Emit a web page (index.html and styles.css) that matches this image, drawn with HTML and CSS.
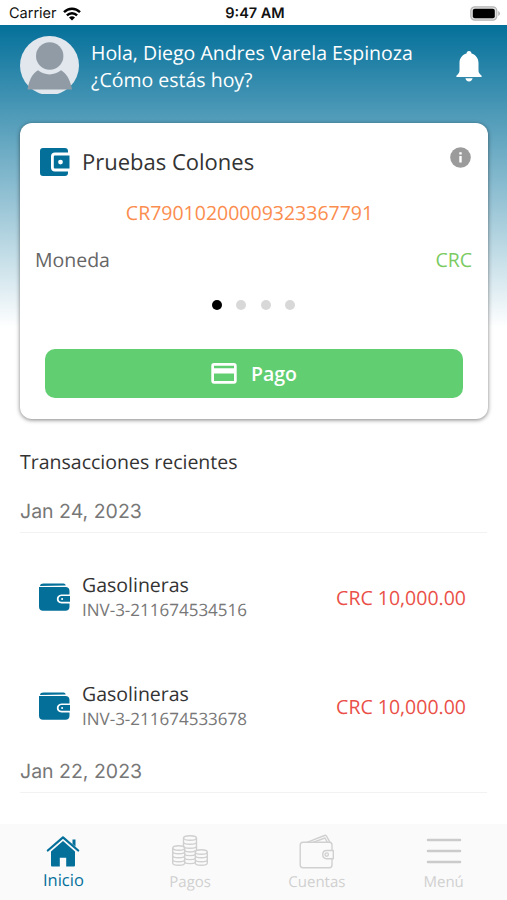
FILE: index.html
```html
<!DOCTYPE html>
<html lang="es">
<head>
  <meta charset="UTF-8" />
  <meta name="viewport" content="width=device-width, initial-scale=1.0"/>
  <title>Inicio</title>
  <link rel="stylesheet" href="styles.css">
</head>
<body>

  <!-- Status bar -->
  <div class="status-bar">
    <div class="carrier">
      <span>Carrier</span>
      <svg width="18" height="14" viewBox="0 0 18 14">
        <g fill="none" stroke="#000" stroke-width="2.4">
          <path d="M1 5.2C5.5.6 12.5.6 17 5.2"/>
          <path d="M3.9 8.4c2.9-2.9 7.3-2.9 10.2 0"/>
        </g>
        <path d="M6 10.5c1.7-1.600 4.300-1.600 6 0l-3 3z"/>
      </svg>
    </div>
    <span class="clock">9:47 AM</span>
    <svg class="battery" width="31" height="15" viewBox="0 0 31 15">
      <rect x=".8" y=".8" width="26" height="13.4" rx="4" fill="#e0e0e0" stroke="#b5b5b5" stroke-width="1.2"/>
      <rect x="2.8" y="2.8" width="22" height="9.4" rx="2" fill="#000"/>
      <path d="M28.3 5c2 .8 2 4.200 0 5z" fill="#aaa"/>
    </svg>
  </div>

  <main>
    <!-- Greeting -->
    <header>
      <svg class="avatar" width="59" height="59" viewBox="0 0 59 59">
        <clipPath id="face"><path d="M0 0h59v58H0z"/></clipPath>
        <g clip-path="url(#face)">
          <circle cx="29.5" cy="29.5" r="29.5" fill="#e1e7ed"/>
          <circle cx="29.7" cy="20" r="13.7" fill="#919ba5"/>
          <path d="M7.500 53.500c1.500-9 4.500-15.500 10.500-19.200 6.500 5.500 16.500 5.500 23 0 6 3.700 9.500 10.200 11 19.200z" fill="#919ba5"/>
        </g>
      </svg>
      <div class="greeting">
        <p>Hola, Diego Andres Varela Espinoza</p>
        <p class="question">¿Cómo estás hoy?</p>
      </div>
      <svg class="bell" width="26" height="31" viewBox="0 0 26 31">
        <path fill="#fff" d="M13 0c1.600 0 2.400 1 2.500 2.600 4.200 1.200 7 4.700 7 9.400v7.500c0 1.500.5 2.600 1.600 3.700l1.500 1.500V26H.4v-1.300l1.500-1.500c1.100-1.100 1.600-2.200 1.600-3.700V12c0-4.700 2.800-8.200 7-9.400C10.600 1 11.400 0 13 0zM9.400 27.200h7.200c-.3 2-1.700 3.200-3.600 3.200s-3.300-1.200-3.600-3.200z"/>
      </svg>
    </header>

    <!-- Account card -->
    <section class="card">
      <div class="card-title">
        <svg width="30" height="28" viewBox="0 0 30 28">
          <path fill="#04709a" d="M3 0h22c1.800 0 3 1.200 3 3v1.600H15c-2.600 0-4 1.500-4 4v11c0 2.500 1.400 4 4 4h13v1.400c0 1.800-1.200 3-3 3H3c-1.900 0-3-1.200-3-3V3c0-1.800 1.100-3 3-3z"/>
          <path fill="#04709a" fill-rule="evenodd" d="M15.200 7.600H29.500v13H15.200c-.9 0-1.400-.5-1.400-1.400V9c0-.9.5-1.400 1.400-1.400zm5.300 4.100a2.400 2.400 0 1 0 0 4.800 2.400 2.400 0 0 0 0-4.800z"/>
        </svg>
        <h2>Pruebas Colones</h2>
        <svg class="info" width="21" height="21" viewBox="0 0 21 21">
          <circle cx="10.5" cy="10.5" r="10.3" fill="#9b9b9b"/>
          <path d="M9.300 5.200h2.400v2.300H9.300zM9.300 9h2.400v6.600H9.300z" fill="#fff"/>
        </svg>
      </div>
      <p class="iban">CR79010200009323367791</p>
      <div class="currency">
        <span>Moneda</span>
        <span class="code">CRC</span>
      </div>
      <div class="dots">
        <i class="active"></i><i></i><i></i><i></i>
      </div>
      <button>
        <svg width="26" height="21" viewBox="0 0 26 21">
          <path fill="#fff" fill-rule="evenodd" d="M3 0h20c1.700 0 2.700 1 2.700 2.700v15.400c0 1.700-1 2.600-2.700 2.600H3c-1.700 0-2.700-.9-2.700-2.600V2.700C.3 1 1.300 0 3 0zm0 2.700v2.600h20V2.700zm0 7.700v7.700h20v-7.700z"/>
        </svg>
        <span>Pago</span>
      </button>
    </section>

    <!-- Transactions -->
    <section class="transactions">
      <h3>Transacciones recientes</h3>
      <p class="date">Jan 24, 2023</p>
      <div class="row">
        <svg width="31" height="28" viewBox="0 0 31 28">
          <path d="M1 3C1.300 1.200 2.500.5 4.500.5h20c1.200 0 2 .7 2.200 2z" fill="#04709a"/>
          <path d="M0 4h26.500C29 4 30.500 5.500 30.500 8v3.400h-8c-6.200 0-6.200 9 0 9h8v3.300c0 2.500-1.500 4-4 4H4c-2.500 0-4-1.500-4-4z" fill="#04709a"/>
          <path d="M22.500 13H31v5.800h-8.500c-3.800 0-3.800-5.800 0-5.800zm.6 1.900a1 1 0 1 0 0 2 1 1 0 0 0 0-2z" fill="#04709a" fill-rule="evenodd"/>
        </svg>
        <div class="detail">
          <p class="name">Gasolineras</p>
          <p class="invoice">INV-3-211674534516</p>
        </div>
        <span class="amount">CRC 10,000.00</span>
      </div>
      <div class="row">
        <svg width="31" height="28" viewBox="0 0 31 28">
          <path d="M1 3C1.300 1.200 2.500.5 4.500.5h20c1.200 0 2 .7 2.200 2z" fill="#04709a"/>
          <path d="M0 4h26.500C29 4 30.500 5.500 30.500 8v3.400h-8c-6.200 0-6.200 9 0 9h8v3.300c0 2.500-1.500 4-4 4H4c-2.500 0-4-1.500-4-4z" fill="#04709a"/>
          <path d="M22.500 13H31v5.800h-8.500c-3.800 0-3.800-5.800 0-5.800zm.6 1.900a1 1 0 1 0 0 2 1 1 0 0 0 0-2z" fill="#04709a" fill-rule="evenodd"/>
        </svg>
        <div class="detail">
          <p class="name">Gasolineras</p>
          <p class="invoice">INV-3-211674533678</p>
        </div>
        <span class="amount">CRC 10,000.00</span>
      </div>
      <p class="date">Jan 22, 2023</p>
    </section>
  </main>

  <!-- Bottom tabs -->
  <nav>
    <a class="active">
      <svg width="36" height="36" viewBox="0 0 36 36">
        <path d="M2.800 17.500 18 4.300 33.200 17.500" fill="none" stroke="#04709a" stroke-width="2.200" stroke-linecap="round" stroke-linejoin="round"/>
        <path d="M18 8 30 18.500v13.700c0 .8-.5 1.300-1.300 1.300H21.200v-8.800h-6.400v8.800H7.300c-.8 0-1.300-.5-1.300-1.300V18.500zM27.500 6.500h3v7l-3-2.600z" fill="#04709a"/>
      </svg>
      <span>Inicio</span>
    </a>
    <a>
      <svg width="36" height="36" viewBox="0 0 36 36" fill="none" stroke="#d0d0d0" stroke-width="1.400">
        <ellipse cx="18" cy="5" rx="6.500" ry="2.300"/>
        <path d="M11.500 5v8M24.500 5v12M11.500 9c0 3 13 3 13 0M11.500 13c0 3 13 3 13 0M12.500 17.500c2 2 9 2 11 0M12.500 21.500c2 1.500 9 1.500 11 0M12.500 25.500c2 1.500 9 1.500 11 0M12.500 29.500c2 1.500 9 1.500 11 0"/>
        <ellipse cx="6.700" cy="15" rx="6" ry="2.300"/>
        <path d="M.7 15v15c0 3 12 3 12 0V15M.7 18.500c0 3 12 3 12 0M.7 22.500c0 3 12 3 12 0M.7 26.500c0 3 12 3 12 0"/>
        <ellipse cx="29.300" cy="19" rx="6" ry="2.300"/>
        <path d="M23.300 19v11c0 3 12 3 12 0V19M23.300 22.500c0 3 12 3 12 0M23.300 26.500c0 3 12 3 12 0"/>
      </svg>
      <span>Pagos</span>
    </a>
    <a>
      <svg width="36" height="36" viewBox="0 0 36 36" fill="none" stroke="#d0d0d0" stroke-width="1.400" stroke-linejoin="round">
        <path d="M33 17.500V12c0-1.700-1-2.700-2.700-2.700H4C2.200 9.300 1.200 10.300 1.200 12v20c0 1.700 1 2.700 2.800 2.700h26.300c1.700 0 2.700-1 2.700-2.700v-6.300"/>
        <path d="M8 9.300 25.500 2.500c1-.4 1.800 0 2.200.9l3.300 6M14 9.300 26 5l2.400 4.300"/>
        <path d="M34.300 17.500h-6.800c-5 0-5 8.200 0 8.200h6.800z"/>
        <circle cx="27.700" cy="21.600" r="1.700"/>
      </svg>
      <span>Cuentas</span>
    </a>
    <a>
      <svg width="36" height="36" viewBox="0 0 36 36">
        <path d="M2 7h32M2 18h32M2 29h32" stroke="#cbcbcb" stroke-width="2.600" stroke-linecap="round"/>
      </svg>
      <span>Menú</span>
    </a>
  </nav>

</body>
</html>
```
FILE: styles.css
```css
* { box-sizing: border-box; margin: 0; padding: 0; }

body {
  font-family: 'Open Sans', sans-serif;
  text-rendering: geometricPrecision;
  background: #fff;
  height: 900px;
  display: flex;
  flex-direction: column;
  overflow: hidden;
}

svg { display: block; flex-shrink: 0; }

/* status bar */
.status-bar {
  height: 25px;
  padding: 2px 6px 0 9px;
  display: grid;
  grid-template-columns: 1fr auto 1fr;
  align-items: center;
  font-family: Inter, sans-serif;
  font-size: 14.5px;
  color: #111;
}
.carrier { display: flex; align-items: center; gap: 6px; }
.clock { font-weight: 600; font-size: 14.5px; }
.battery { justify-self: end; }

main {
  flex: 1;
  min-height: 0;
  padding: 11px 20px 0;
  background: linear-gradient(#04709a, #fff 303px);
}

/* greeting */
header { display: flex; align-items: flex-start; height: 87px; color: #fff; }
.greeting { flex: 1; margin-left: 12px; padding-top: 3px; font-size: 19.5px; line-height: 27px; white-space: nowrap; }
.bell { margin: 15px 5px 0 0; }

/* card */
.card {
  width: 468px;
  height: 296px;
  padding: 24px 16px 0 15px;
  background: #fff;
  border-radius: 12px;
  box-shadow: 0 1px 4px rgba(0,0,0,0.5);
}
.card-title { display: flex; align-items: center; height: 30px; padding-left: 5px; }
.card-title h2 { flex: 1; margin-left: 12px; font-size: 22px; font-weight: 400; line-height: 30px; color: #333; }
.info { margin: -9px 1px 0 0; }
.iban { margin: 22px 0 0 -8px; font-size: 19.5px; line-height: 28px; color: #fb8d4e; text-align: center; }
.currency { display: flex; justify-content: space-between; margin-top: 19px; font-size: 19.5px; line-height: 28px; color: #666; }
.currency .code { color: #7bcb62; }
.dots { display: flex; justify-content: center; gap: 14.5px; margin-top: 26px; }
.dots i { width: 10px; height: 10px; border-radius: 50%; background: #d8d8d8; }
.dots .active { background: #000; }

button {
  display: flex;
  align-items: center;
  justify-content: center;
  gap: 14px;
  width: 418px;
  height: 49px;
  margin: 39px 0 0 10px;
  border: none;
  border-radius: 10px;
  background: #62ce72;
  color: #fff;
  font-family: inherit;
  font-size: 19.5px;
  font-weight: 600;
}

/* transactions */
.transactions { padding-top: 29px; }
.transactions h3 { font-size: 19.5px; font-weight: 400; line-height: 28px; color: #333; }
.date { height: 38px; font-family: Inter, sans-serif; font-size: 19.5px; line-height: 32px; color: #777; border-bottom: 1px solid #f2f2f2; }
h3 + .date { margin-top: 19px; }
.row { display: flex; align-items: center; height: 98px; padding: 0 21px 0 19px; }
h3 + .date + .row { margin-top: 15px; }
.row + .row { margin-top: 11px; }
.detail { flex: 1; margin-left: 12px; }
.name { font-size: 19.5px; line-height: 26px; color: #333; }
.invoice { font-size: 17px; line-height: 24px; color: #777; }
.amount { font-size: 19.5px; color: #ea5048; }

/* bottom tabs */
nav { display: flex; height: 76px; background: #fafafa; }
nav a { flex: 1; display: flex; flex-direction: column; align-items: center; padding-top: 9px; font-size: 15px; color: #d0d0d0; }
nav span { margin-top: 3px; line-height: 20px; }
nav .active { color: #04709a; font-size: 16.5px; }
nav .active span { margin-top: 1px; }
```
